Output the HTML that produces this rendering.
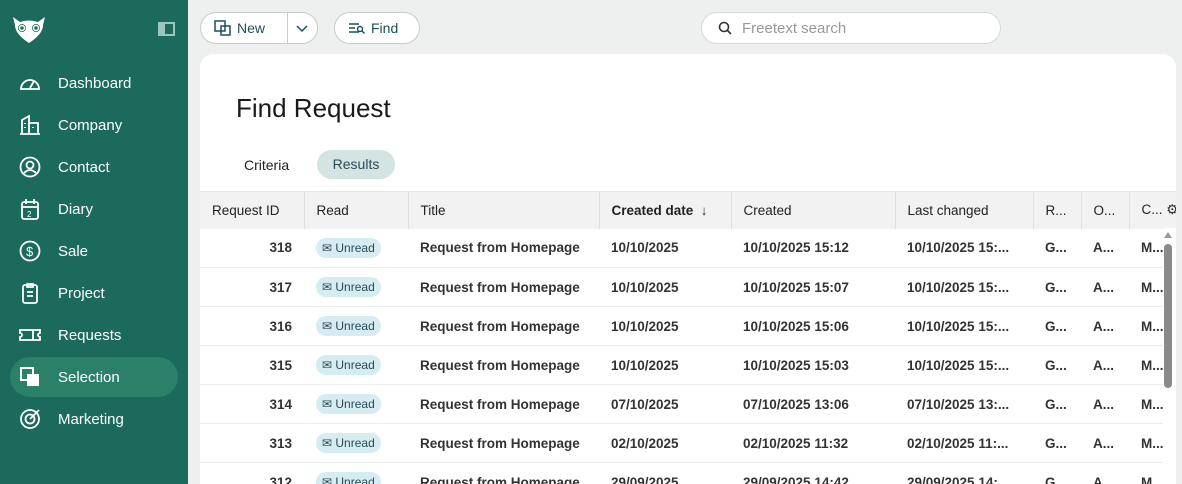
<!DOCTYPE html>
<html style="overflow:hidden;height:484px"><head><style>
*{box-sizing:border-box;margin:0;padding:0}
body{width:1182px;height:484px;overflow:hidden;background:#eef0ef;font-family:"Liberation Sans",sans-serif;position:relative;color:#222}
.sb{position:absolute;left:0;top:0;width:188px;height:484px;background:#1b6a5c}
.nav{position:absolute;left:10px;width:168px;height:40px;border-radius:20px;color:#fff;font-size:15px;display:flex;align-items:center}
.nav svg{position:absolute;left:9px;top:9px}
.nav span{position:absolute;left:48px}
.nav.sel{background:#2b8068}
.btn{position:absolute;top:12px;height:32px;border:1px solid #c9ccca;border-radius:16px;background:#fff;font-size:14px;color:#1b4f5a;display:flex;align-items:center}
.card{position:absolute;left:200px;top:54px;width:976px;height:430px;background:#fff;border-radius:14px 14px 0 0;overflow:hidden}
table{position:absolute;left:0;top:137px;border-collapse:collapse;font-size:13.5px;table-layout:fixed;width:979px}
th{background:#f2f2f2;height:37px;font-weight:normal;text-align:left;padding-left:12px;border-right:1px solid #e0e0e0;border-top:1px solid #e6e6e6;color:#222;white-space:nowrap;overflow:hidden}
td{height:39px;border-bottom:1px solid #ececec;padding-left:12px;font-weight:bold;color:#333;white-space:nowrap;overflow:hidden}
td.id{text-align:right;padding-right:12px}
.badge{display:inline-flex;align-items:center;background:#d5ecf0;border-radius:10px;height:20px;padding:0 6px;font-weight:normal;font-size:12px;color:#2a4a55}
</style></head><body>
<div class="sb">
<svg style="position:absolute;left:12px;top:16px" width="34" height="28" viewBox="0 0 34 28" fill="none" stroke="#fff" stroke-width="2"><path d="M1 1 L8 6 Q17 3 26 6 L33 1 L31 9 Q31 18 17 27 Q3 18 3 9 Z" fill="#fff" stroke="none"/><circle cx="10" cy="12" r="5" fill="#1b6a5c"/><circle cx="24" cy="12" r="5" fill="#1b6a5c"/><circle cx="10" cy="12" r="2.5" stroke="#fff" stroke-width="1.5"/><circle cx="24" cy="12" r="2.5" stroke="#fff" stroke-width="1.5"/></svg>
<div style="position:absolute;left:158px;top:22px;width:17px;height:14px;border:2px solid #9cc5bb;background:#1b6a5c"><div style="width:5px;height:10px;background:#9cc5bb"></div></div>
<div class="nav" style="top:63px"><svg width="22" height="22" viewBox="0 0 22 22" fill="none" stroke="#fff" stroke-width="1.8"><path d="M2 17 A9 9 0 1 1 20 17 Z M11 16 L15 9"/></svg><span>Dashboard</span></div>
<div class="nav" style="top:105px"><svg width="22" height="22" viewBox="0 0 22 22" fill="none" stroke="#fff" stroke-width="1.8"><path d="M1 20 H21 M3 20 V6 L10 2 V20 M10 9 H19 V20 M6 9 v1 M6 13 v1 M14 13v1"/></svg><span>Company</span></div>
<div class="nav" style="top:147px"><svg width="22" height="22" viewBox="0 0 22 22" fill="none" stroke="#fff" stroke-width="1.8"><circle cx="11" cy="11" r="9.5"/><circle cx="11" cy="9" r="3.5"/><path d="M5 17 Q11 11 17 17"/></svg><span>Contact</span></div>
<div class="nav" style="top:189px"><svg width="22" height="22" viewBox="0 0 22 22" fill="none" stroke="#fff" stroke-width="1.8"><rect x="3" y="4" width="16" height="17" rx="2"/><path d="M7 1v5M15 1v5M3 9h16"/><text x="8" y="19" font-size="8" fill="#fff" stroke="none">2</text></svg><span>Diary</span></div>
<div class="nav" style="top:231px"><svg width="22" height="22" viewBox="0 0 22 22" fill="none" stroke="#fff" stroke-width="1.8"><circle cx="11" cy="11" r="9.5"/><text x="7" y="16" font-size="13" fill="#fff" stroke="none">$</text></svg><span>Sale</span></div>
<div class="nav" style="top:273px"><svg width="22" height="22" viewBox="0 0 22 22" fill="none" stroke="#fff" stroke-width="1.8"><rect x="4" y="3" width="14" height="18" rx="2"/><path d="M8 2h6v3H8zM8 10h6M8 14h6"/></svg><span>Project</span></div>
<div class="nav" style="top:315px"><svg width="22" height="22" viewBox="0 0 22 22" fill="none" stroke="#fff" stroke-width="1.8"><path d="M1 6 H21 V9 A2 2 0 0 0 21 13 V16 H1 V13 A2 2 0 0 0 1 9 Z M14 6v10"/></svg><span>Requests</span></div>
<div class="nav sel" style="top:357px"><svg width="22" height="22" viewBox="0 0 22 22"><rect x="2" y="2" width="12" height="12" fill="none" stroke="#fff" stroke-width="2"/><rect x="8" y="8" width="12" height="12" fill="#fff"/></svg><span>Selection</span></div>
<div class="nav" style="top:399px"><svg width="22" height="22" viewBox="0 0 22 22" fill="none" stroke="#fff" stroke-width="1.8"><circle cx="11" cy="11" r="9"/><circle cx="11" cy="11" r="4.5"/><path d="M11 11 L20 2"/></svg><span>Marketing</span></div>
</div>
<div class="btn" style="left:200px;width:118px"><svg style="margin-left:13px" width="18" height="18" viewBox="0 0 18 18" fill="none" stroke="#1b4f5a" stroke-width="1.5"><rect x="1" y="2" width="10" height="10"/><rect x="7" y="7" width="9" height="9"/></svg><span style="margin-left:5px">New</span><div style="position:absolute;left:86px;top:0;height:30px;border-left:1px solid #c9ccca"></div><svg style="position:absolute;left:95px;top:10px" width="12" height="10" viewBox="0 0 12 10" fill="none" stroke="#1b4f5a" stroke-width="1.5"><path d="M1 3l5 5 5-5"/></svg></div>
<div class="btn" style="left:334px;width:86px"><svg style="margin-left:13px" width="18" height="14" viewBox="0 0 18 14" fill="none" stroke="#1b4f5a" stroke-width="1.4"><path d="M1 3h10M1 7h6M1 11h10"/><circle cx="12" cy="8" r="2.5"/><path d="M14 10l2.5 2.5"/></svg><span style="margin-left:5px">Find</span></div>
<div style="position:absolute;left:701px;top:12px;width:300px;height:32px;background:#fff;border:1px solid #d6d8d7;border-radius:16px;font-size:15px;color:#999;display:flex;align-items:center"><svg style="margin-left:16px" width="14" height="14" viewBox="0 0 14 14" fill="none" stroke="#333" stroke-width="1.6"><circle cx="6" cy="6" r="4.5"/><path d="M9.5 9.5L13 13"/></svg><span style="margin-left:10px">Freetext search</span></div>
<div class="card">
<div style="position:absolute;left:36px;top:39px;font-size:26px;color:#1a1a1a">Find Request</div>
<div style="position:absolute;left:44px;top:103px;font-size:14px">Criteria</div>
<div style="position:absolute;left:117px;top:96px;width:78px;height:29px;background:#d3e4e3;border-radius:15px;font-size:14px;color:#2a4a55;text-align:center;line-height:29px">Results</div>
<table>
<colgroup><col style="width:104px"><col style="width:104px"><col style="width:191px"><col style="width:132px"><col style="width:164px"><col style="width:138px"><col style="width:48px"><col style="width:48px"><col style="width:50px"></colgroup>
<tr><th>Request ID</th><th>Read</th><th>Title</th><th style="font-weight:bold">Created date <span style="font-weight:normal">&nbsp;↓</span></th><th>Created</th><th>Last changed</th><th>R...</th><th>O...</th><th>C... ⚙</th></tr>
<tr><td class="id">318</td><td><span class="badge">✉ Unread</span></td><td>Request from Homepage</td><td>10/10/2025</td><td>10/10/2025 15:12</td><td>10/10/2025 15:...</td><td>G...</td><td>A...</td><td>M...</td></tr>
<tr><td class="id">317</td><td><span class="badge">✉ Unread</span></td><td>Request from Homepage</td><td>10/10/2025</td><td>10/10/2025 15:07</td><td>10/10/2025 15:...</td><td>G...</td><td>A...</td><td>M...</td></tr>
<tr><td class="id">316</td><td><span class="badge">✉ Unread</span></td><td>Request from Homepage</td><td>10/10/2025</td><td>10/10/2025 15:06</td><td>10/10/2025 15:...</td><td>G...</td><td>A...</td><td>M...</td></tr>
<tr><td class="id">315</td><td><span class="badge">✉ Unread</span></td><td>Request from Homepage</td><td>10/10/2025</td><td>10/10/2025 15:03</td><td>10/10/2025 15:...</td><td>G...</td><td>A...</td><td>M...</td></tr>
<tr><td class="id">314</td><td><span class="badge">✉ Unread</span></td><td>Request from Homepage</td><td>07/10/2025</td><td>07/10/2025 13:06</td><td>07/10/2025 13:...</td><td>G...</td><td>A...</td><td>M...</td></tr>
<tr><td class="id">313</td><td><span class="badge">✉ Unread</span></td><td>Request from Homepage</td><td>02/10/2025</td><td>02/10/2025 11:32</td><td>02/10/2025 11:...</td><td>G...</td><td>A...</td><td>M...</td></tr>
<tr><td class="id">312</td><td><span class="badge">✉ Unread</span></td><td>Request from Homepage</td><td>29/09/2025</td><td>29/09/2025 14:42</td><td>29/09/2025 14:...</td><td>G...</td><td>A...</td><td>M...</td></tr>
</table>
<div style="position:absolute;left:963px;top:174px;width:13px;height:266px;background:#fff"></div>
<div style="position:absolute;left:964px;top:178px;width:0;height:0;border-left:4px solid transparent;border-right:4px solid transparent;border-bottom:6px solid #999"></div>
<div style="position:absolute;left:964px;top:190px;width:8px;height:144px;background:#8a8a8a;border-radius:4px"></div>
</div>
</body></html>
